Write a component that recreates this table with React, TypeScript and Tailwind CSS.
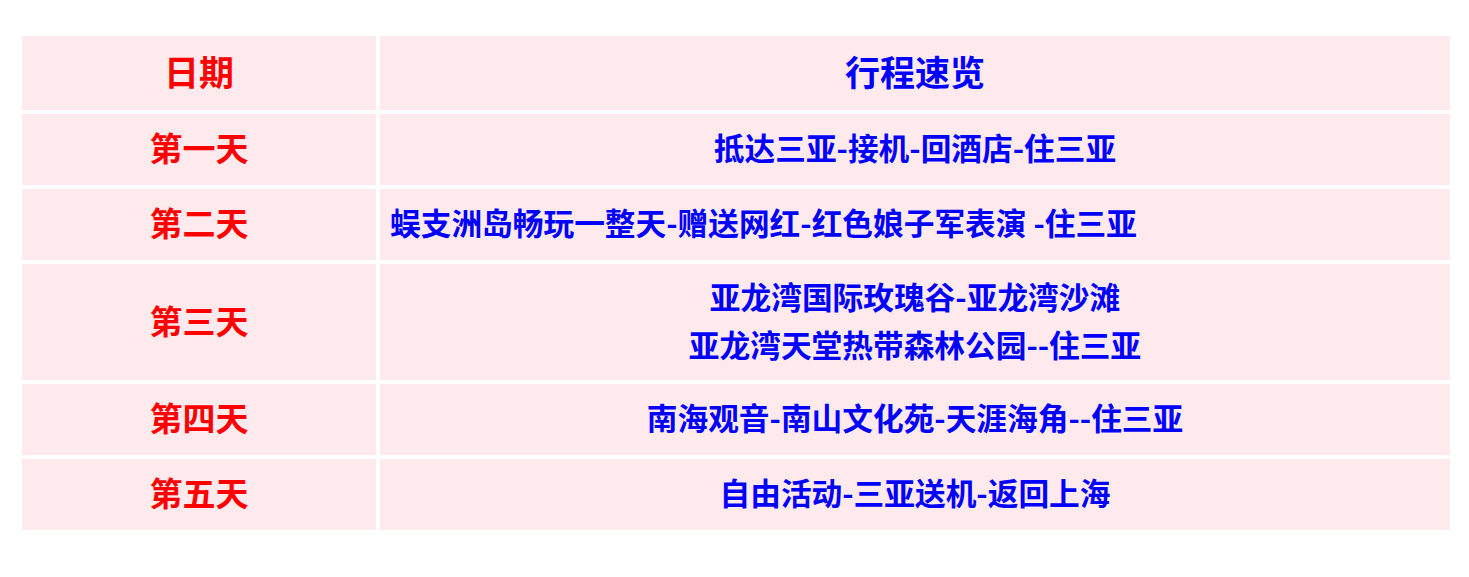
import React from 'react';

type Row = {
  day: string;
  lines: string[];
  left?: boolean;
  height: string;
};

const rows: Row[] = [
  { day: '第一天', lines: ['抵达三亚-接机-回酒店-住三亚'], height: 'h-[71px]' },
  {
    day: '第二天',
    lines: ['蜈支洲岛畅玩一整天-赠送网红-红色娘子军表演 -住三亚'],
    left: true,
    height: 'h-[71px]',
  },
  {
    day: '第三天',
    lines: ['亚龙湾国际玫瑰谷-亚龙湾沙滩', '亚龙湾天堂热带森林公园--住三亚'],
    height: 'h-[116px]',
  },
  { day: '第四天', lines: ['南海观音-南山文化苑-天涯海角--住三亚'], height: 'h-[71px]' },
  { day: '第五天', lines: ['自由活动-三亚送机-返回上海'], height: 'h-[71px]' },
];

const App = () => {
  return (
    <div className="min-h-screen bg-white pt-[36px] pl-[22px]">
      <div className="grid w-[1428px] grid-cols-[354px_1070px] gap-[4px] font-['Noto_Sans_CJK_SC',sans-serif] font-bold leading-[48px]">
        <div className="flex h-[74px] items-center justify-center bg-[#fee9ec] pb-[4px] text-[35px] text-[#ff0000]">
          日期
        </div>
        <div className="flex h-[74px] items-center justify-center bg-[#fee9ec] pb-[4px] text-[35px] text-[#0000ff]">
          行程速览
        </div>
        {rows.map((row) => (
          <React.Fragment key={row.day}>
            <div
              className={`flex ${row.height} items-center justify-center bg-[#fee9ec] pb-[5px] text-[33px] text-[#ff0000]`}
            >
              {row.day}
            </div>
            <div
              className={`flex ${row.height} flex-col justify-center bg-[#fee9ec] pb-[5px] text-[30.7px] text-[#0000ff] ${
                row.left ? 'items-start pl-[10px]' : 'items-center'
              }`}
            >
              {row.lines.map((line) => (
                <span key={line} className="whitespace-pre">
                  {line}
                </span>
              ))}
            </div>
          </React.Fragment>
        ))}
      </div>
    </div>
  );
};

export default App;
